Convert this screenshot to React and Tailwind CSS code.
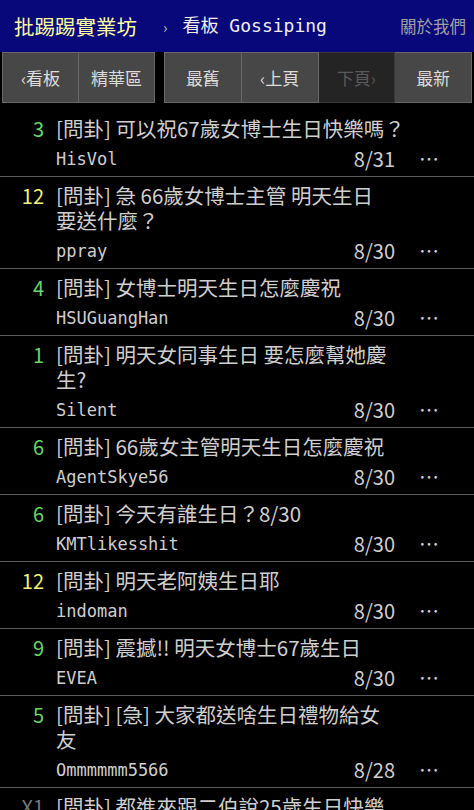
import React from "react";

const rows = [
  { n: "3", c: "text-[#66d666]", t: ["[問卦] 可以祝67歲女博士生日快樂嗎？"], a: "HisVol", d: "8/31" },
  { n: "12", c: "text-[#f2f27a]", t: ["[問卦] 急 66歲女博士主管 明天生日", "要送什麼？"], a: "ppray", d: "8/30" },
  { n: "4", c: "text-[#66d666]", t: ["[問卦] 女博士明天生日怎麼慶祝"], a: "HSUGuangHan", d: "8/30" },
  { n: "1", c: "text-[#66d666]", t: ["[問卦] 明天女同事生日 要怎麼幫她慶", "生?"], a: "Silent", d: "8/30" },
  { n: "6", c: "text-[#66d666]", t: ["[問卦] 66歲女主管明天生日怎麼慶祝"], a: "AgentSkye56", d: "8/30" },
  { n: "6", c: "text-[#66d666]", t: ["[問卦] 今天有誰生日？8/30"], a: "KMTlikesshit", d: "8/30" },
  { n: "12", c: "text-[#f2f27a]", t: ["[問卦] 明天老阿姨生日耶"], a: "indoman", d: "8/30" },
  { n: "9", c: "text-[#66d666]", t: ["[問卦] 震撼!! 明天女博士67歲生日"], a: "EVEA", d: "8/30" },
  { n: "5", c: "text-[#66d666]", t: ["[問卦] [急] 大家都送啥生日禮物給女", "友"], a: "Ommmmmm5566", d: "8/28" },
  { n: "X1", c: "text-[#777777]", t: ["[問卦] 都進來跟二伯說25歲生日快樂"], a: "duncan0911", d: "8/28" },
];

const sans = "font-['Noto_Sans_CJK_TC','Noto_Sans',sans-serif]";
const mono = "font-['DejaVu_Sans_Mono','Noto_Sans_CJK_TC',monospace]";

function Btn({ children, disabled, first }) {
  return (
    <div
      className={
        "flex-1 flex items-center justify-center border text-[17px] " +
        (first ? "" : "border-l-0 ") +
        (disabled
          ? "bg-[#242424] border-[#3a3a3a] text-[#5a5a5a]"
          : "bg-[#474747] border-[#686868] text-[#dddddd]")
      }
    >
      {children}
    </div>
  );
}

export default function App() {
  return (
    <div className={"w-[474px] h-[810px] overflow-hidden bg-black " + sans}>
      <div className="h-[52px] bg-[#08087a] flex items-center pl-[14px] pr-[8px]">
        <span className="text-[20.5px] text-[#ffffa0] leading-none">批踢踢實業坊</span>
        <span className="ml-[26px] text-[15px] text-[#bbbbbb] leading-none">›</span>
        <span className={"ml-[15px] text-[18px] text-[#eeeeee] leading-none " + mono}>看板 Gossiping</span>
        <span className="ml-auto text-[16.5px] text-[#a0a0a0] leading-none">關於我們</span>
      </div>
      <div className="h-[51px] flex px-[2px] gap-[9px]">
        <div className="w-[153px] flex">
          <Btn first>‹看板</Btn>
          <Btn>精華區</Btn>
        </div>
        <div className="flex-1 flex">
          <Btn first>最舊</Btn>
          <Btn>‹上頁</Btn>
          <Btn disabled>下頁›</Btn>
          <Btn>最新</Btn>
        </div>
      </div>
      <div className="mt-[7px]">
        {rows.map((r, i) => (
          <div key={i} className="flex pt-[6px] pb-[5px] pr-[11px] border-b border-[#5a5a5a]">
            <div className={"w-[44px] shrink-0 text-right text-[20px] leading-[25px] " + r.c}>{r.n}</div>
            <div className="ml-[12px] flex-1 min-w-0">
              <div className="text-[20.5px] leading-[25px] text-[#cfcfcf]">
                {r.t.map((l, j) => (
                  <div key={j} className="whitespace-nowrap">{l}</div>
                ))}
              </div>
              <div className="mt-[6px] flex items-center h-[24px]">
                <span className={"flex-1 text-[17px] leading-[24px] text-[#cfcfcf] " + mono}>{r.a}</span>
                <span className="text-[20px] leading-[24px] text-[#cfcfcf]">{r.d}</span>
                <span className="w-[68px] text-center text-[20px] leading-[24px] text-[#cfcfcf]">⋯</span>
              </div>
            </div>
          </div>
        ))}
      </div>
    </div>
  );
}
